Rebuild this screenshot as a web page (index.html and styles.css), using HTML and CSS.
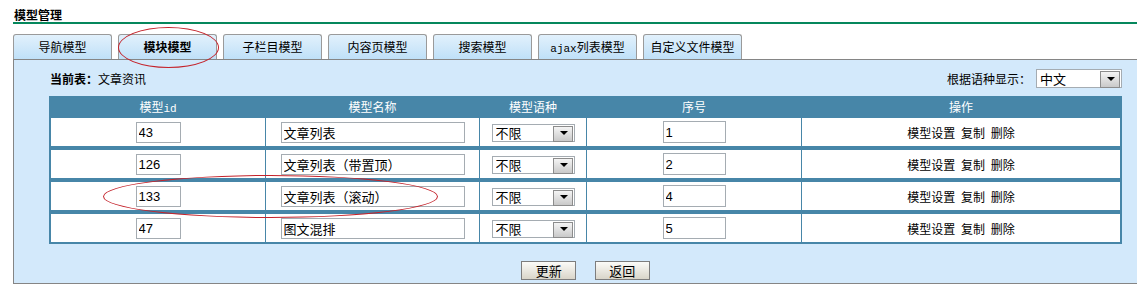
FILE: index.html
```html
<!DOCTYPE html>
<html lang="zh-CN">
<head>
  <meta charset="UTF-8">
  <title>模型管理</title>
  <link rel="stylesheet" href="styles.css">
</head>
<body>
  <div class="page">
    <h2 class="page-title">模型管理</h2>
    <div class="tabs">
      <a class="tab" href="#">导航模型</a>
      <a class="tab tab-active" href="#">模块模型</a>
      <a class="tab" href="#">子栏目模型</a>
      <a class="tab" href="#">内容页模型</a>
      <a class="tab" href="#">搜索模型</a>
      <a class="tab" href="#"><span class="mono">ajax</span>列表模型</a>
      <a class="tab" href="#">自定义文件模型</a>
    </div>
    <div class="panel">
      <div class="panel-head">
        <div class="current"><b>当前表：</b>文章资讯</div>
        <div class="lang">
          根据语种显示：
          <span class="select-box lang-select"><select><option>中文</option></select></span>
        </div>
      </div>
      <table class="model-table">
        <thead>
          <tr>
            <th class="c1">模型<span class="mono">id</span></th>
            <th class="c2">模型名称</th>
            <th class="c3">模型语种</th>
            <th class="c4">序号</th>
            <th class="c5">操作</th>
          </tr>
        </thead>
        <tbody>
          <tr>
            <td><input class="in-id" type="text" value="43"></td>
            <td><input class="in-name" type="text" value="文章列表"></td>
            <td><span class="select-box"><select><option>不限</option></select></span></td>
            <td><input class="in-order" type="text" value="1"></td>
            <td class="ops">模型设置 复制 删除</td>
          </tr>
          <tr>
            <td><input class="in-id" type="text" value="126"></td>
            <td><input class="in-name" type="text" value="文章列表（带置顶）"></td>
            <td><span class="select-box"><select><option>不限</option></select></span></td>
            <td><input class="in-order" type="text" value="2"></td>
            <td class="ops">模型设置 复制 删除</td>
          </tr>
          <tr>
            <td><input class="in-id" type="text" value="133"></td>
            <td><input class="in-name" type="text" value="文章列表（滚动）"></td>
            <td><span class="select-box"><select><option>不限</option></select></span></td>
            <td><input class="in-order" type="text" value="4"></td>
            <td class="ops">模型设置 复制 删除</td>
          </tr>
          <tr>
            <td><input class="in-id" type="text" value="47"></td>
            <td><input class="in-name" type="text" value="图文混排"></td>
            <td><span class="select-box"><select><option>不限</option></select></span></td>
            <td><input class="in-order" type="text" value="5"></td>
            <td class="ops">模型设置 复制 删除</td>
          </tr>
        </tbody>
      </table>
      <div class="actions">
        <button class="btn" type="button">更新</button>
        <button class="btn" type="button">返回</button>
      </div>
    </div>
    <div class="mark mark-tab"></div>
    <div class="mark mark-row"></div>
  </div>
</body>
</html>
```

FILE: styles.css
```css
* {
  box-sizing: border-box;
}
body {
  margin: 0;
  background: #fff;
  font-family: "Noto Sans CJK SC", "Liberation Sans", sans-serif;
  font-size: 12px;
  color: #000;
}
.page {
  position: relative;
  height: 293px;
}
.page-title {
  margin: 0 0 0 13px;
  padding: 7px 0 0 1px;
  height: 24px;
  font-size: 12px;
  line-height: 15px;
  font-weight: bold;
  border-bottom: 2px solid #05875c;
}
.mono {
  font-family: "Liberation Mono", "DejaVu Sans Mono", monospace;
  font-size: 11px;
}
.tabs {
  display: flex;
  gap: 6px;
  margin: 10px 0 0 13px;
}
.tab {
  width: 99px;
  height: 25px;
  line-height: 23px;
  text-align: center;
  color: #000;
  text-decoration: none;
  border: 1px solid #9a9a9a;
  border-bottom: none;
  border-radius: 3px 3px 0 0;
  background: linear-gradient(#e2f1fc, #bfe0f8);
}
.tab-active {
  font-weight: bold;
}
.panel {
  margin-left: 13px;
  padding: 9px 0 4px 0;
  height: 225px;
  background: #d3e9fb;
  border: 1px solid #858585;
  border-right: none;
}
.panel-head {
  display: flex;
  justify-content: space-between;
  align-items: center;
  height: 19px;
  margin: 0 15px 0 36px;
}
.current b {
  font-weight: bold;
}
.lang {
  display: flex;
  align-items: center;
  gap: 5px;
}
.select-box {
  position: relative;
  display: inline-block;
  width: 83px;
  height: 18px;
  vertical-align: middle;
  background: #fff;
  border: 1px solid #a5acb2;
}
.lang-select {
  width: 86px;
  height: 19px;
}
.select-box select {
  appearance: none;
  -webkit-appearance: none;
  display: block;
  width: 100%;
  height: 100%;
  border: none;
  background: transparent;
  font-family: "Noto Sans CJK SC", sans-serif;
  font-size: 13px;
  line-height: 15px;
  padding: 0 0 1px 3px;
  color: #000;
}
.select-box::after {
  content: "";
  position: absolute;
  top: 1px;
  right: 1px;
  width: 18px;
  height: calc(100% - 2px);
  background: linear-gradient(#f4f4f4, #c9c9c9);
  border: 1px solid #8c8c8c;
}
.select-box::before {
  content: "";
  position: absolute;
  top: 50%;
  right: 6px;
  margin-top: -2px;
  border-left: 4px solid transparent;
  border-right: 4px solid transparent;
  border-top: 4px solid #000;
  z-index: 1;
}
.model-table {
  margin: 8px 0 0 35px;
  width: 1073px;
  table-layout: fixed;
  border-collapse: separate;
  border-spacing: 0;
  border: 2px solid #4786a8;
  background: #4786a8;
}
.model-table th {
  height: 19px;
  padding: 0;
  font-weight: normal;
  color: #fff;
  line-height: 17px;
  vertical-align: top;
  border-right: 1px solid #4786a8;
}
.model-table .c1 { width: 215px; }
.model-table .c2 { width: 214px; }
.model-table .c3 { width: 107px; }
.model-table .c4 { width: 215px; }
.model-table th:last-child {
  border-right: none;
}
.model-table td {
  height: 32px;
  padding: 0;
  text-align: center;
  background: #fff;
  border-right: 1px solid #4786a8;
  border-bottom: 4px solid #4786a8;
}
.model-table td:last-child {
  border-right: none;
}
.model-table tr:last-child td {
  height: 28px;
  border-bottom: none;
}
.model-table .ops {
  word-spacing: 3px;
}
.model-table input {
  height: 21px;
  padding: 0 0 0 2px;
  border: 1px solid #a5acb2;
  font-family: "Liberation Sans", "Noto Sans CJK SC", sans-serif;
  font-size: 13px;
  color: #000;
  vertical-align: middle;
}
.in-id {
  width: 45px;
}
.in-name {
  width: 184px;
}
.in-order {
  width: 63px;
  height: 22px !important;
}
.actions {
  width: 1073px;
  margin: 17px 0 0 35px;
  text-align: center;
}
.btn {
  width: 55px;
  height: 19px;
  margin: 0 8px;
  padding: 0;
  font-family: "Noto Sans CJK SC", sans-serif;
  font-size: 13px;
  line-height: 16px;
  color: #000;
  background: linear-gradient(#fbfbf8, #d9d5c9);
  border: 1px solid #7d7d7d;
}
.mark {
  position: absolute;
  border: 1px solid #c4232b;
  border-radius: 50%;
  pointer-events: none;
}
.mark-tab {
  left: 118px;
  top: 27px;
  width: 101px;
  height: 41px;
}
.mark-row {
  left: 103px;
  top: 175px;
  width: 335px;
  height: 43px;
}
```
